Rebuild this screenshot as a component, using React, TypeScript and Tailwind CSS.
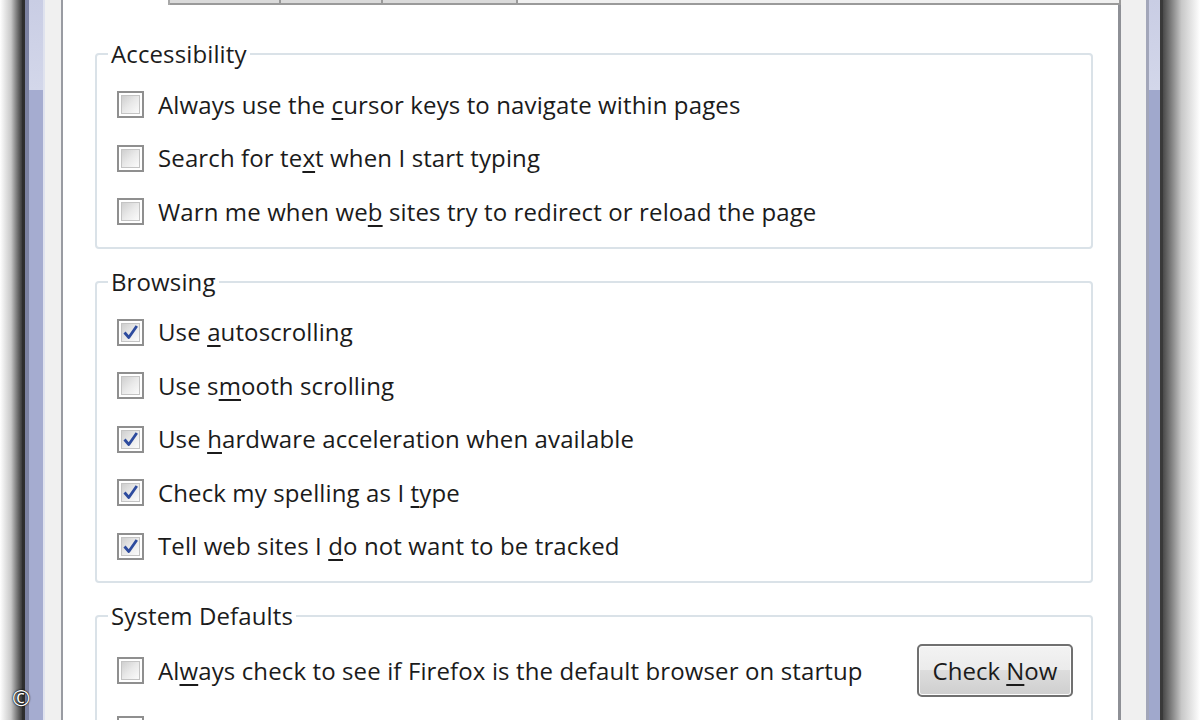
import React from 'react';

type Item = { label?: React.ReactNode; checked?: boolean };

// access-key underline
const K = ({ children }: { children: React.ReactNode }) => (
  <span className="underline decoration-2 underline-offset-[4px]">{children}</span>
);

const CheckBox = ({ checked }: { checked?: boolean }) => (
  <span className="relative flex h-[27px] w-[27px] shrink-0 items-center justify-center border-2 border-[#8f8f8f] bg-white">
    <span className="h-[19px] w-[19px] border border-[#c4c4c4] bg-gradient-to-br from-[#cfcfcf] via-[#e9e9e9] to-[#fbfbfb]" />
    {checked && (
      <svg className="absolute left-[2px] top-[2px]" width="19" height="19" viewBox="0 0 19 19">
        <path d="M3.5 9.5 L7.8 14.5 L15.8 3" fill="none" stroke="#2d4b9e" strokeWidth="2.8" strokeLinejoin="round" />
      </svg>
    )}
  </span>
);

const Row = ({ item, children }: { item: Item; children?: React.ReactNode }) => (
  <div className="flex h-[53.5px] items-center">
    <CheckBox checked={item.checked} />
    {item.label && (
      <span className="ml-[14px] text-[24px] leading-[32px] tracking-[0.12px] text-[#1b1b1b]">{item.label}</span>
    )}
    {children}
  </div>
);

const Group = ({ title, children, className }: { title: string; children: React.ReactNode; className?: string }) => (
  <fieldset className={`ml-[32px] mr-[25px] rounded-[4px] border-2 border-[#dae2e8] pb-[8px] pl-[20px] pr-[18px] pt-[8px] ${className ?? ''}`}>
    <legend className="-ml-[9px] px-[3px] text-[24px] leading-[32px] tracking-[0.12px] text-[#1c1c1c]">{title}</legend>
    {children}
  </fieldset>
);

const accessibility: Item[] = [
  { label: <>Always use the <K>c</K>ursor keys to navigate within pages</> },
  { label: <>Search for te<K>x</K>t when I start typing</> },
  { label: <>Warn me when we<K>b</K> sites try to redirect or reload the page</> },
];

const browsing: Item[] = [
  { label: <>Use <K>a</K>utoscrolling</>, checked: true },
  { label: <>Use s<K>m</K>ooth scrolling</> },
  { label: <>Use <K>h</K>ardware acceleration when available</>, checked: true },
  { label: <>Check my spelling as I <K>t</K>ype</>, checked: true },
  { label: <>Tell web sites I <K>d</K>o not want to be tracked</>, checked: true },
];

export default function App() {
  return (
    <div
      className="relative flex h-[720px] w-[1200px] overflow-hidden bg-white"
      style={{ fontFamily: '"Open Sans", "Noto Sans", sans-serif' }}
    >
      {/* left window frame */}
      <div className="flex shrink-0">
        <div className="w-[22px] bg-gradient-to-r from-white via-[#c8c8c8] to-[#3c3c3c]" />
        <div className="w-[3px] bg-[#2e2e2e]" />
        <div className="w-[4px] bg-[#7c82a2]" />
        <div className="flex w-[14px] flex-col">
          <div className="h-[90px] bg-gradient-to-b from-[#c9cde4] to-[#d3d7ea]" />
          <div className="flex-1 bg-[#a5acd0]" />
        </div>
        <div className="w-[2px] bg-[#dfe2ee]" />
        <div className="w-[16px] bg-[#f0f0f0]" />
      </div>

      {/* tab control */}
      <div className="flex w-[1060px] shrink-0 flex-col">
        <div className="flex h-[5px] shrink-0">
          <div className="w-[109px] border-l-2 border-r-2 border-l-[#999ba2] border-r-[#a8a8a8] bg-white" />
          <div className="w-[111px] border-b-2 border-r-2 border-[#9a9a9a] bg-[#dadada]" />
          <div className="w-[102px] border-b-2 border-r-2 border-[#9a9a9a] bg-[#dadada]" />
          <div className="w-[135px] border-b-2 border-r-2 border-[#9a9a9a] bg-[#dadada]" />
          <div className="flex-1 border-b-2 border-r-2 border-[#9a9a9a] bg-[#f0f0f0]" />
        </div>
        <div className="flex-1 border-l-2 border-r-[3px] border-l-[#999ba2] border-r-[#8e9096] bg-white">
          <Group title="Accessibility" className="mt-[33px]">
            {accessibility.map((it, i) => (
              <Row key={i} item={it} />
            ))}
          </Group>

          <Group title="Browsing" className="mt-[17px]">
            {browsing.map((it, i) => (
              <Row key={i} item={it} />
            ))}
          </Group>

          <Group title="System Defaults" className="mt-[17px]">
            <div className="flex h-[61px] items-center">
              <CheckBox />
              <span className="ml-[14px] text-[24px] leading-[32px] tracking-[0.12px] text-[#1b1b1b]">
                Al<K>w</K>ays check to see if Firefox is the default browser on startup
              </span>
              <button className="ml-auto h-[53px] w-[156px] rounded-[5px] border-2 border-[#707070] bg-[linear-gradient(to_bottom,#f3f3f3_0%,#ebebeb_50%,#dddddd_50%,#cfcfcf_100%)] text-[24px] leading-[32px] text-[#1b1b1b] shadow-[inset_0_0_0_1px_#fcfcfc]">
                Check <K>N</K>ow
              </button>
            </div>
            <div className="pt-[2px]">
              <Row item={{}} />
            </div>
          </Group>
        </div>
      </div>

      {/* right window frame */}
      <div className="flex shrink-0 grow">
        <div className="w-[25px] bg-[#f0f0f0]" />
        <div className="w-[3px] bg-[#a2a6b9]" />
        <div className="flex w-[11px] flex-col">
          <div className="h-[90px] bg-gradient-to-b from-[#c9cde4] to-[#d3d7ea]" />
          <div className="flex-1 bg-[#a0a8cc]" />
        </div>
        <div className="w-[3px] bg-[#3a3a3a]" />
        <div className="flex-1 bg-gradient-to-r from-[#4a4a4a] via-[#c8c8c8] to-white" />
      </div>

      {/* watermark */}
      <span className="absolute left-[12px] top-[684px] text-[22px] leading-[26px] text-white [text-shadow:0_0_2px_#000,0_0_1px_#000]">
        ©
      </span>
    </div>
  );
}
